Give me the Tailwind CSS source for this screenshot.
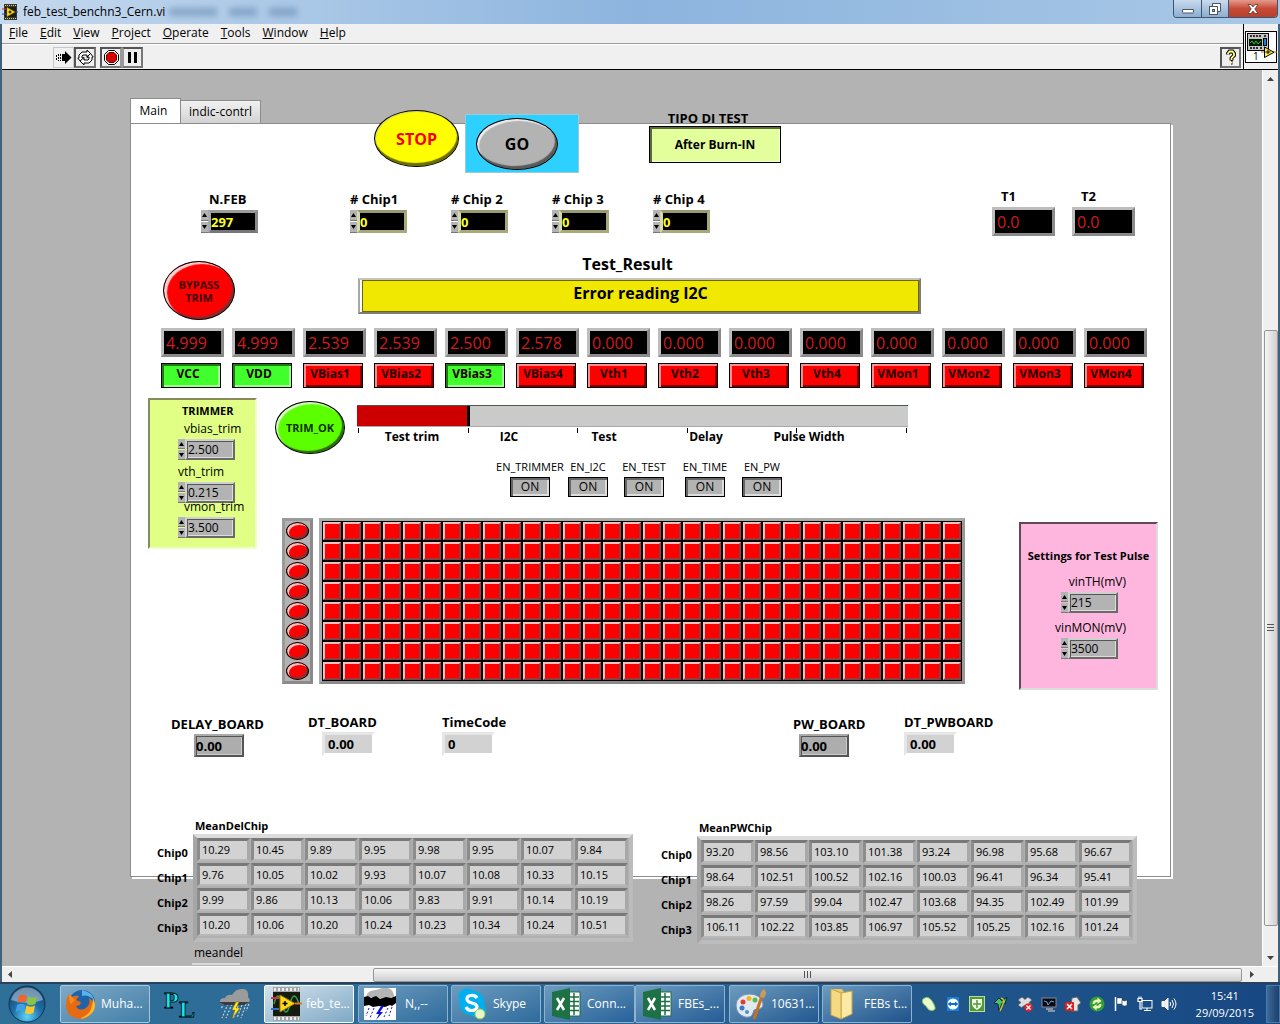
<!DOCTYPE html>
<html lang="en">
<head>
  <meta charset="UTF-8">
  <meta name="viewport" content="width=device-width, initial-scale=1.0">
  <title>feb_test_benchn3_Cern.vi</title>
  <script src="https://cdn.jsdelivr.net/npm/@tailwindcss/browser@4"></script>
</head>
<body class="flex min-h-screen flex-col bg-[#2a668f] font-['Open_Sans','Noto_Sans',sans-serif] text-[12px] leading-4 text-black">

<!-- Title bar -->
<header class="relative flex h-6 items-center overflow-hidden bg-linear-to-r from-[#c5d9ee] via-[#8cb4de] to-[#a9c8e6] pl-[2px]">
  <svg class="h-4 w-4" viewBox="0 0 16 16">
    <rect x="2" y="0" width="13" height="16" fill="#3a3a2c"/>
    <path d="M3 1.500h11M3 14.500h11" stroke="#c8c8b0" stroke-dasharray="1 1"/>
    <rect x="3" y="3" width="11" height="10" fill="#1d1d12"/>
    <path d="M5 3.500v9l8-4.500z" fill="#ffdf1c" stroke="#b98a00" stroke-width=".5"/>
    <path d="M6.500 8h3M8 6.500v3" stroke="#000"/>
    <path d="M0 5h4" stroke="#e02020"/><path d="M0 10h4M13 8h3" stroke="#2040d0"/>
  </svg>
  <h1 class="ml-[5px] text-[12px]">feb_test_benchn3_Cern.vi</h1>
  <div class="ml-1 h-2 w-12 bg-[#3f6a94]/40 blur-[3px]"></div>
  <div class="ml-3 h-2 w-7 bg-[#3f6a94]/40 blur-[3px]"></div>
  <div class="ml-3 h-2 w-7 bg-[#3f6a94]/40 blur-[3px]"></div>
  <div class="mr-[2px] ml-auto flex h-[18px] self-start overflow-hidden rounded-b border border-t-0 border-[#3d5573]">
    <button class="flex w-7 items-center justify-center border-r border-[#3d5573] bg-linear-to-b from-[#c9dbee] to-[#8dadd0]" aria-label="Minimize">
      <svg class="h-3 w-3" viewBox="0 0 12 12"><rect x=".5" y="6.500" width="11" height="3.500" rx=".5" fill="#fff" stroke="#4a5568"/></svg>
    </button>
    <button class="flex w-[27px] items-center justify-center border-r border-[#3d5573] bg-linear-to-b from-[#c9dbee] to-[#8dadd0]" aria-label="Restore">
      <svg class="h-3 w-3" viewBox="0 0 12 12"><path d="M3.500.5h8v8h-3v-5h-5z" fill="#fff" stroke="#4a5568"/><rect x=".5" y="3.500" width="8" height="8" fill="#fff" stroke="#4a5568"/><rect x="3.500" y="6.500" width="2" height="2" fill="#8dadd0" stroke="#4a5568"/></svg>
    </button>
    <button class="flex w-12 items-center justify-center bg-linear-to-b from-[#e49a8c] via-[#c64a37] to-[#b8402c]" aria-label="Close">
      <svg class="h-3 w-3" viewBox="0 0 12 12"><path d="M1 1.500h3L6 4l2-2.500h3L7.800 6l3.200 4.500H8L6 8l-2 2.500H1L4.200 6z" fill="#fff" stroke="#54392f" stroke-width=".8"/></svg>
    </button>
  </div>
</header>

<div class="flex flex-1 flex-col border-x-2 border-[#40617c]">

  <!-- Menu and tool bar -->
  <div class="flex h-[46px] border-b border-black bg-[#f0f0f0]">
    <div class="flex-1">
      <nav class="flex h-5 items-center gap-3 border-b border-[#9a9a9a] pb-[2px] pl-[7px]">
        <a href="#"><u>F</u>ile</a>
        <a href="#"><u>E</u>dit</a>
        <a href="#"><u>V</u>iew</a>
        <a href="#"><u>P</u>roject</a>
        <a href="#"><u>O</u>perate</a>
        <a href="#"><u>T</u>ools</a>
        <a href="#"><u>W</u>indow</a>
        <a href="#"><u>H</u>elp</a>
      </nav>
      <div class="flex h-[25px] items-center border-t border-white pr-[2px] pl-[51px]">
        <button class="flex h-[21px] w-[21px] items-center justify-center border border-[#c8c8c8] bg-[#f0f0f0]" aria-label="Run">
          <svg class="h-[17px] w-[17px]" viewBox="0 0 17 17"><path d="M7 5h3V2l6.500 6.500L10 15v-3H7z"/><path d="M1.500 6v5M3.500 5v7M5.500 5v7" stroke="#000" stroke-dasharray="2 1"/></svg>
        </button>
        <button class="flex h-[21px] w-[22px] items-center justify-center border-2 border-t-[#555] border-r-[#777] border-b-[#777] border-l-[#555] bg-[#eee]" aria-label="Run continuously">
          <svg class="h-[17px] w-[17px] shrink-0" viewBox="0 0 17 17" fill="#fff" stroke="#000"><path d="M2 9V6l3-3h5V1l4 4-4 3.500V6H6L5 7v2h2l-3.500 3.500L.8 9z"/><path d="M15 8v3l-3 3H7v2l-4-4 4-3.500V11h4l1-1V8h-2l3.500-3.500L16.200 8z"/></svg>
        </button>
        <button class="ml-1 flex h-[21px] w-[22px] items-center justify-center border-2 border-t-[#555] border-r-[#999] border-b-[#777] border-l-[#555] bg-[#eee]" aria-label="Abort execution">
          <svg class="h-[17px] w-[17px] shrink-0" viewBox="0 0 17 17"><path d="M5.500 1.500h6l4 4v6l-4 4h-6l-4-4v-6z" fill="#fff" stroke="#000"/><path d="M6 3.500h5l2.500 2.500v5L11 13.500H6L3.500 11V6z" fill="#d80000" stroke="#600"/></svg>
        </button>
        <button class="flex h-[21px] w-[21px] items-center justify-center border-2 border-t-[#555] border-r-[#777] border-b-[#777] border-l-[#999] bg-[#eee]" aria-label="Pause">
          <svg class="h-[11px] w-[11px]" viewBox="0 0 11 11"><path d="M1 0h3v11H1zM7 0h3v11H7z"/></svg>
        </button>
        <button class="ml-auto flex h-[21px] w-[21px] items-center justify-center border-2 border-t-[#555] border-r-[#777] border-b-[#777] border-l-[#555] bg-[#eee]" aria-label="Context help">
          <svg class="h-4 w-3" viewBox="0 0 12 16" fill="none"><path d="M3 5.500V4.500l1.500-2h3l1.500 2v2L6.500 9v2.500M6 13.500h1.500" stroke="#000" stroke-width="3.800"/><path d="M3 5.500V4.500l1.500-2h3l1.500 2v2L6.500 9v2M6 13.500h1.300" stroke="#ffff80" stroke-width="1.800"/></svg>
        </button>
      </div>
    </div>
    <div class="flex w-[35px] items-center border-l border-black pl-px">
      <svg class="h-8 w-8 shrink-0" viewBox="0 0 32 32">
        <rect x=".5" y=".5" width="31" height="31" fill="#fff" stroke="#000"/>
        <rect x="2.500" y="2.500" width="21" height="17" fill="#c4c4c4" stroke="#000"/>
        <path d="M5 5h12M19 5h3M5 17h8M15 17h2" stroke="#000" stroke-width="1.500" stroke-dasharray="2 1"/>
        <rect x="4" y="8" width="13" height="7" fill="#001a00"/><path d="M5 12l2-2 2 3 2-3 2 3 3-3" stroke="#30c030" fill="none"/>
        <rect x="18.500" y="7.500" width="3" height="7" fill="#1a80e0" stroke="#000"/>
        <path d="M16 21h3M28 21h4" stroke="#e05010"/><path d="M19.500 16v10.500L29 21.300z" fill="#ffef30" stroke="#000"/><path d="M20.500 21h5M23 19v4" stroke="#000"/>
        <text x="8" y="29" font-size="10" fill="#000">1</text>
      </svg>
    </div>
  </div>

  <div class="flex flex-1">

    <!-- Front panel -->
    <main class="flex-1 bg-[#b3b3b3] pt-7 pr-[91px] pl-32">
      <div class="flex items-end" role="tablist">
        <button class="h-[25px] w-[51px] border border-b-0 border-[#8c8c8c] bg-white pr-1 text-[12px]" role="tab" aria-selected="true">Main</button>
        <button class="h-[23px] w-20 border border-b-0 border-l-0 border-[#8c8c8c] bg-linear-to-b from-[#f2f2f2] to-[#d2d2d2] text-[12px]" role="tab">indic-contrl</button>
      </div>

      <div class="border border-[#8c8c8c] bg-white pb-[119px] shadow-[2px_2px_0_#fff]">

        <div class="-mt-[14px] flex h-16 items-start pl-[243px]">
          <button class="h-[57px] w-[85px] rounded-[50%] border border-black bg-[#ffff00] text-[16px] font-bold text-[#f00000] shadow-[inset_-1px_-3px_1px_#6b6b00,inset_1px_1px_1px_#d8d860]">STOP</button>
          <div class="mt-1 ml-[6px] flex h-[59px] w-[114px] border border-[#9fc8d8] bg-[#2ed0ff] pt-[3px] pl-[10px]">
            <button class="h-[52px] w-[82px] rounded-[50%] border border-black bg-[#b3b3b3] text-[16px] font-bold shadow-[inset_-2px_-3px_1px_#5a5a5a,inset_2px_2px_1px_#ececec]">GO</button>
          </div>
          <div class="ml-[70px] flex w-[132px] flex-col text-center font-bold">
            <label for="testType" class="pr-[14px] text-[13px] leading-4">TIPO DI TEST</label>
            <input id="testType" value="After Burn-IN" class="h-[37px] w-full border border-black bg-[#e2ff9b] text-center text-[12px] shadow-[inset_2px_2px_0_#5d6b3a,inset_-1px_-1px_0_#f4ffd8]">
          </div>
        </div>

        <div id="headerRow" class="flex h-[72px] items-start pt-[17px] pr-[35px] pl-[70px] text-[13px] leading-4 font-bold"></div>

        <div class="flex h-[82px] items-start pt-[10px] pl-8">
          <button class="mt-[5px] h-[59px] w-[72px] rounded-[50%] border border-black bg-[#ff0000] text-[11px] leading-[13px] font-bold text-[#400000] shadow-[inset_-2px_-2px_1px_#7a3030,inset_3px_2px_1px_#ffd0d0]">BYPASS<br>TRIM</button>
          <div class="ml-[123px] w-[563px]">
            <label for="testResult" class="block h-[22px] pr-6 text-center text-[16px] leading-4 font-bold">Test_Result</label>
            <div class="border-2 border-t-[#c4c4c4] border-r-[#7c7c7c] border-b-[#7c7c7c] border-l-[#a8a8a8] pl-[2px]">
              <input id="testResult" value="Error reading I2C" class="h-8 w-full border border-[#6b6600] bg-[#f0e800] pb-[6px] text-center text-[16px] font-bold">
            </div>
          </div>
        </div>

        <div id="channels" class="grid grid-cols-[repeat(14,minmax(0,1fr))] pr-[15px] pl-[30px]"></div>

        <div class="mt-[10px] flex items-start pl-[17px]">
          <fieldset class="h-[151px] w-[109px] border-2 border-t-[#868a5c] border-r-[#eeffc8] border-b-[#eeffc8] border-l-[#868a5c] bg-[#e0ff84] pt-[3px] pl-7">
            <h2 class="pl-1 text-[11px] leading-[15px] font-bold">TRIMMER</h2>
            <div id="trimmer" class="flex flex-col gap-1 pt-[3px]"></div>
          </fieldset>

          <div class="ml-[18px] w-[690px]">
            <div class="flex h-[61px] items-start pt-[3px]">
              <button class="h-[53px] w-[70px] shrink-0 rounded-[50%] border border-black bg-[#5cff00] text-[11px] font-bold text-[#103000] shadow-[inset_-2px_-2px_1px_#2d6a10,inset_2px_2px_1px_#e0f0d8]">TRIM_OK</button>
              <div class="ml-3 w-[551px] pt-1">
                <div class="h-[22px] border-t border-b border-t-[#4a5a4a] border-b-[#aaa] bg-[#cacaca]" role="progressbar" aria-label="Test progress" aria-valuenow="1" aria-valuemax="5">
                  <div class="h-[20px] border-r-3 border-black bg-[#cc0000]" style="width: 20.500%"></div>
                </div>
                <div class="flex justify-between pt-[1px] pr-px pl-px">
                  <i class="h-[5px] w-px bg-black"></i><i class="h-[5px] w-px bg-black"></i><i class="h-[5px] w-px bg-black"></i><i class="h-[5px] w-px bg-black"></i><i class="h-[5px] w-px bg-black"></i><i class="h-[5px] w-px bg-black"></i>
                </div>
                <div class="-mt-1 ml-[7px] grid grid-cols-[96px_98px_92px_112px_94px] text-center font-bold">
                  <span>Test trim</span><span>I2C</span><span>Test</span><span>Delay</span><span>Pulse Width</span>
                </div>
              </div>
            </div>

            <div id="enables" class="grid h-[59px] grid-cols-[72px_44px_68px_54px_60px] pl-[219px] text-[11px] leading-4"></div>

            <div class="flex gap-[6px] pl-[7px]">
              <div id="leds" class="flex w-8 flex-col border-3 border-t-[#9a9a9a] border-r-[#8a8a8a] border-b-[#8a8a8a] border-l-[#9a9a9a] bg-[#b3b3b3]"></div>
              <div id="matrix" class="grid grid-cols-[repeat(32,20px)] border-3 border-t-[#aaa] border-r-[#999] border-b-[#8a8a8a] border-l-[#aaa] bg-black"></div>
            </div>
          </div>

          <fieldset class="mt-[124px] ml-[54px] h-[168px] w-[139px] border-2 border-t-[#5e4a55] border-r-[#dcdcdc] border-b-[#dcdcdc] border-l-[#5e4a55] bg-[#ffb6de]">
            <h2 class="pt-6 text-center text-[11px] leading-4 font-bold">Settings for Test Pulse</h2>
            <div id="pulse" class="flex flex-col gap-[7px] pt-[10px] pl-[34px]"></div>
          </fieldset>
        </div>

        <div id="boards" class="grid grid-cols-[137px_134px_351px_111px_auto] items-start pt-6 pl-10 text-[13px] leading-4 font-bold"></div>
      </div>

      <!-- The mean tables hang over the lower edge of the panel -->
      <div class="-mt-[58px] flex gap-7 pl-[27px]">
        <table id="meanDel" class="w-[476px] table-fixed border-separate border-spacing-0 self-start"></table>
        <table id="meanPw" class="mt-[2px] w-[476px] table-fixed border-separate border-spacing-0 self-start"></table>
      </div>
      <div class="pt-px pl-16">meandel</div>
      <div class="mt-[2px] ml-[62px] h-[2px] w-12 bg-[#d8d8d8]"></div>
    </main>

    <!-- Vertical scroll bar -->
    <div class="flex w-4 flex-col items-center border-l border-white bg-[#efefef]" aria-hidden="true">
      <svg class="mt-[5px] h-2 w-[7px]" viewBox="0 0 7 8"><path d="M0 6l3.500-4L7 6z" fill="#444"/></svg>
      <div class="mt-[247px] flex w-[14px] flex-1 items-center justify-center rounded-xs border border-[#979797] bg-linear-to-r from-[#f6f6f6] to-[#cfcfd3]">
        <svg class="h-2 w-[7px]" viewBox="0 0 7 8"><path d="M0 .5h7M0 3.500h7M0 6.500h7" stroke="#555"/></svg>
      </div>
      <svg class="mt-7 mb-1 h-2 w-[7px]" viewBox="0 0 7 8"><path d="M0 2l3.500 4L7 2z" fill="#444"/></svg>
    </div>
  </div>

  <!-- Horizontal scroll bar -->
  <div class="flex h-4 items-center border-t border-white bg-[#efefef] pr-[22px] pl-1" aria-hidden="true">
    <svg class="h-[7px] w-2" viewBox="0 0 8 7"><path d="M6 0L2 3.500 6 7z" fill="#444"/></svg>
    <div class="ml-[359px] flex h-[14px] flex-1 items-center justify-center rounded-xs border border-[#979797] bg-linear-to-b from-[#f6f6f6] to-[#cfcfd3]">
      <svg class="h-[7px] w-2" viewBox="0 0 8 7"><path d="M.5 0v7M3.500 0v7M6.500 0v7" stroke="#555"/></svg>
    </div>
    <svg class="ml-[6px] h-[7px] w-2" viewBox="0 0 8 7"><path d="M2 0l4 3.500L2 7z" fill="#444"/></svg>
  </div>
</div>

<!-- Task bar -->
<footer class="relative flex h-[42px] items-center border-t-2 border-[#29425a] bg-linear-to-r from-[#2f7099] via-[#2b6594] to-[#174782] text-white">
  <button class="ml-2 h-[38px] w-[38px]" aria-label="Start">
    <svg class="h-full w-full" viewBox="0 0 38 38">
      <defs><radialGradient id="orb" cx=".5" cy=".85" r=".8"><stop offset="0" stop-color="#5fd6f8"/><stop offset=".5" stop-color="#1f6fa8"/><stop offset="1" stop-color="#16456f"/></radialGradient></defs>
      <circle cx="19" cy="19" r="18" fill="url(#orb)" stroke="#123450"/>
      <path d="M3 15a16.500 16.500 0 0 1 32 0q-16 6-32 0z" fill="#fff" opacity=".4"/>
      <path d="M11 11q4-3 8 0l-1.500 7q-4-2.500-8 0z" fill="#f1642a"/><path d="M20.500 11.500q4 2.500 8.500 0l-1.500 7.500q-4.500 2-8.500 0z" fill="#8cc63e"/>
      <path d="M9 20q4-2.500 8 0l-1.500 7q-4-2.500-8 0z" fill="#3fa0e6"/><path d="M18.500 20.500q4 2.500 8.500 0L25.500 28q-4.500 2-8.500 0z" fill="#fdc72e"/>
    </svg>
  </button>
  <button class="ml-[14px] flex h-[38px] w-[90px] items-center gap-1 rounded-xs border border-[#a9c6da] bg-linear-to-br from-[#7ea9c6] to-[#417fa8] pl-1">
    <svg class="h-8 w-8 shrink-0" viewBox="0 0 32 32"><circle cx="17" cy="15" r="13" fill="#1f63ad"/><path d="M17 2q10 2 12 10-6-6-12-4z" fill="#59b4e8"/><path d="M4 6l3 3q3-2 7-1l-3 4 5 2-1 3-4 1q2 5 8 3 7-3 5-11 7 5 4 13-4 8-13 8Q2 30 1 18 1 11 4 6z" fill="#e66a12"/><path d="M28 10q5 9-2 16-5 5-12 5 10-4 12-10 2-5 2-11z" fill="#fbb92a"/><path d="M4 6l3 3 3 3-4 4q-3-5-2-10z" fill="#f58a1f"/></svg>
    <span>Muha...</span>
  </button>
  <button class="ml-3 h-9 w-9" aria-label="PL">
    <svg class="h-full w-full overflow-visible" viewBox="0 0 36 36"><g font-family="Liberation Serif" font-weight="bold" font-size="24" fill="#16e6ee" stroke="#000" stroke-width=".8"><text x="2" y="22">P</text><text x="17" y="31">L</text></g></svg>
  </button>
  <button class="ml-[18px] h-9 w-9" aria-label="Thunderstorm">
    <svg class="h-full w-full" viewBox="0 0 36 36"><path d="M8 17l-3 6M12 18l-6 14M16 18l-6 14M22 20l-5 13M26 19l-5 13M30 18l-5 14M33 18l-3 7" stroke="#c8d0d6" stroke-dasharray="2 1.500" stroke-width="1.200"/><path d="M4 17q-1-5 5-5 2-4 7-3Q20 2 27 3q6 0 5 8 4 4-1 7H7z" fill="#9b9b9b"/><path d="M3 16h31l-6 3-20 0z" fill="#3b3b3b"/><path d="M20 16l-4 8h3l-3 9 8-11h-4l3-6z" fill="#ffe92b" stroke="#8a6a00" stroke-width=".5"/></svg>
  </button>
  <button class="ml-3 flex h-[38px] w-[90px] items-center gap-1 rounded-xs border border-white bg-linear-to-br from-[#d4e2ec] to-[#7fa9c5] pl-[6px]">
    <svg class="h-9 w-[31px] shrink-0" viewBox="0 0 31 36"><rect x="2" y="1" width="27" height="34" fill="#a5a5a5"/><path d="M3 3.500h25M3 32.500h25" stroke="#eee" stroke-width="3" stroke-dasharray="2 2"/><rect x="2" y="6" width="27" height="24" fill="#161b10"/><path d="M3 18q4-16 8 0t8 0 9 0" fill="none" stroke="#2aa35f" stroke-width="1.500"/><path d="M9 9v17l15-8.500z" fill="#ffd91a" stroke="#a67a00"/><path d="M11.500 17.500h5M14 15v5" stroke="#000" stroke-width="1.500"/><path d="M0 12h8" stroke="#e03030" stroke-width="2"/><path d="M0 23h8" stroke="#3070c0" stroke-width="2"/><path d="M24 17.500h7" stroke="#e07030" stroke-width="2"/></svg>
    <span>feb_te...</span>
  </button>
  <button class="ml-1 flex h-[38px] w-[90px] items-center gap-[9px] rounded-xs border border-[#8fb3cf] bg-linear-to-br from-[#6d9cbe] to-[#2d6b9c] pl-[5px]">
    <svg class="h-8 w-8 shrink-0" viewBox="0 0 32 32"><rect width="32" height="32" fill="#fff"/><path d="M2 8q2-6 10-6l6-2h6q6 2 6 9-14 4-28-1z" fill="#b5b5b5"/><path d="M0 9l4-1 3 2 5-2 4 3 6-2 5 1 5-2v7l-4 3-2-1-5 2-6-1-6 1-4-2-5 1z" fill="#000"/><path d="M5 20l-3 8M10 20l-4 10M24 20l-4 9M28 19l-3 9" stroke="#1010e0" stroke-dasharray="2 2"/><path d="M17 18l-5 8h3l-3 6 7-8h-3l4-6z" fill="#1010e8"/></svg>
    <span>N,,--</span>
  </button>
  <button class="ml-[3px] flex h-[38px] w-[90px] items-center gap-[7px] rounded-xs border border-[#8fb3cf] bg-linear-to-br from-[#6d9cbe] to-[#2d6b9c] pl-[6px]">
    <svg class="h-8 w-7 shrink-0" viewBox="0 0 28 32"><circle cx="9" cy="9" r="8.500" fill="#00aff0"/><circle cx="14" cy="15" r="12.500" fill="#00aff0"/><circle cx="20" cy="22" r="8" fill="#00aff0"/><path d="M19 10q-2-3-6-2.500-4.500.5-4 4 .5 2.500 5 3.500t5 3.500q0 4-5.500 4-4 0-5.500-3.500" fill="none" stroke="#fff" stroke-width="3.200"/><circle cx="22" cy="26" r="5" fill="#e9f7c8" stroke="#9cc850"/></svg>
    <span>Skype</span>
  </button>
  <button class="ml-[3px] flex h-[38px] w-[91px] items-center gap-[5px] rounded-xs border border-[#8fb3cf] bg-linear-to-br from-[#6d9cbe] to-[#26629a] pl-[6px]">
    <svg class="h-8 w-[31px] shrink-0" viewBox="0 0 31 32"><rect x="16" y="4" width="13" height="24" fill="#fff" stroke="#1e6e42"/><path d="M17 9h11M17 13.500h11M17 18h11M17 22.500h11M23 5v22" stroke="#1e6e42" stroke-width="1.500"/><path d="M1 4L19 0v32L1 28z" fill="#1e7145"/><path d="M6 10l7 12M13 10L6 22" stroke="#fff" stroke-width="2.500"/></svg>
    <span>Conn...</span>
  </button>
  <button class="flex h-[38px] w-[90px] items-center gap-[5px] rounded-xs border border-[#8fb3cf] bg-linear-to-br from-[#6d9cbe] to-[#245c96] pl-[6px]">
    <svg class="h-8 w-[31px] shrink-0" viewBox="0 0 31 32"><rect x="16" y="4" width="13" height="24" fill="#fff" stroke="#1e6e42"/><path d="M17 9h11M17 13.500h11M17 18h11M17 22.500h11M23 5v22" stroke="#1e6e42" stroke-width="1.500"/><path d="M1 4L19 0v32L1 28z" fill="#1e7145"/><path d="M6 10l7 12M13 10L6 22" stroke="#fff" stroke-width="2.500"/></svg>
    <span>FBEs_...</span>
  </button>
  <button class="ml-1 flex h-[38px] w-[90px] items-center gap-1 rounded-xs border border-[#8fb3cf] bg-linear-to-br from-[#6d9cbe] to-[#22588f] pl-[5px]">
    <svg class="h-8 w-8 shrink-0" viewBox="0 0 32 32"><path d="M14 6q12 0 14 10 0 5-6 5-4 0-4 4-1 5-8 4Q1 26 1 17 2 7 14 6z" fill="#dfe9f2" stroke="#7795ad"/><circle cx="8" cy="14" r="2.500" fill="#e23c2c"/><circle cx="14" cy="10.500" r="2.500" fill="#f2b321"/><circle cx="20" cy="12" r="2.500" fill="#58b947"/><circle cx="7" cy="20" r="2.500" fill="#3d79cf"/><circle cx="12" cy="24" r="2" fill="#4a90d0"/><path d="M27 8L19 31" stroke="#c96f22" stroke-width="3"/><path d="M25 9q0-6 4-8 4 3 0 9z" fill="#c79a62"/></svg>
    <span>10631...</span>
  </button>
  <button class="ml-[3px] flex h-[38px] w-[90px] items-center gap-[8px] rounded-xs border border-[#8fb3cf] bg-linear-to-br from-[#6d9cbe] to-[#1e528b] pl-[5px]">
    <svg class="h-8 w-7 shrink-0" viewBox="0 0 28 32"><path d="M3 1h11l2 3v25l-13-2z" fill="#e8c964"/><path d="M13 5l11-2v23l-11 5z" fill="#fbeaa6" stroke="#c9a545"/><path d="M3 1l10 4v26L3 27z" fill="#f5da83" stroke="#c9a545"/></svg>
    <span>FEBs t...</span>
  </button>

  <div class="ml-[9px] flex items-center gap-2">
    <svg class="h-4 w-4" viewBox="0 0 16 16"><path d="M2 3q5-4 9 2 5 8 2 9-5 2-8-4-5-3-3-7z" fill="#e8fbd0" stroke="#8ac858"/></svg>
    <svg class="h-4 w-4" viewBox="0 0 16 16"><path d="M2 1h12v14H2z" fill="#1680e0"/><circle cx="8" cy="8" r="5.500" fill="#fff"/><path d="M2.500 8L6 5.500V7h4V5.500L13.500 8 10 10.500V9H6v1.500z" fill="#0f6fd0"/></svg>
    <svg class="h-4 w-4" viewBox="0 0 16 16"><rect x=".5" y=".5" width="15" height="15" fill="#4f9c37" stroke="#b7dba3"/><path d="M3 3h10v6q-2 4-5 5-3-1-5-5z" fill="#f2f7e6"/><path d="M8 4v8M4 8h8" stroke="#4f9c37" stroke-width="1.500"/></svg>
    <svg class="h-4 w-4" viewBox="0 0 16 16"><path d="M1 7l5-5 3 3 5-4-2 7-3-1-3 8-1-7z" fill="#48c26a" stroke="#033"/><path d="M8 2q4 1 2 6l-3 7" fill="none" stroke="#e8b81a" stroke-width="1.500"/></svg>
    <svg class="h-4 w-4" viewBox="0 0 16 16"><path d="M1 4l4-3 3 2.500L11 1l4 3-3 2.500L15 9l-3.500 2.500L8 9l-3.500 2.500L1 9l3-2.500z" fill="#ddd" stroke="#555" stroke-width=".6"/><circle cx="11.500" cy="11.500" r="4.200" fill="#d8232a"/><path d="M9.500 9.500l4 4M13.500 9.500l-4 4" stroke="#fff" stroke-width="1.300"/></svg>
    <svg class="h-4 w-4" viewBox="0 0 16 16"><rect x="1" y="2" width="14" height="9" fill="#0a0a14" stroke="#889"/><path d="M3 5l3 1 1 3 3-4 3 1" fill="none" stroke="#6ac"/><path d="M5 13h7M7 15h7" stroke="#aaa" stroke-width="1.500"/></svg>
    <svg class="h-4 w-4" viewBox="0 0 16 16"><path d="M7 2l5-1 4 6-3 2v6H5z" fill="#e6e6e6" stroke="#666"/><rect x="0" y="6" width="9" height="9" rx="1" fill="#d81e1e"/><path d="M2 8l5 5M7 8l-5 5" stroke="#fff" stroke-width="1.500"/></svg>
    <svg class="h-4 w-4" viewBox="0 0 16 16"><circle cx="8" cy="8" r="7.500" fill="#2f9e38"/><path d="M3.500 8q0-4.500 5-4.500V1.500l4 3.500-4 3V6Q6 6 5.500 8zM12.500 8q0 4.500-5 4.500v2l-4-3.500 4-3v2q2.500 0 3-2z" fill="#f2f5b8"/></svg>
    <svg class="h-4 w-4" viewBox="0 0 16 16"><path d="M2.500 1v14" stroke="#fff" stroke-width="1.500"/><path d="M4 2h5v6H4zM9 4q3 2 5 0v5q-2 2-5 0z" fill="#fff" stroke="#233" stroke-width=".4"/></svg>
    <svg class="h-4 w-4" viewBox="0 0 16 16" fill="none" stroke="#fff"><rect x="5" y="4.500" width="10" height="7.500"/><path d="M7 14.500h7M10 12v2M1 2.500h4v3H1zM2 .5v2M4 .5v2M3 6v7h2" stroke-width="1.200"/></svg>
    <svg class="h-4 w-4" viewBox="0 0 16 16" fill="none" stroke="#fff"><path d="M1 5.500h2.500L7 2v12L3.500 10.500H1z" fill="#eee"/><path d="M9 6q1.500 2 0 4M11 4q3 4 0 8M13 2.500q4 5.500 0 11"/></svg>
  </div>
  <time class="ml-auto pr-3 text-center text-[11px] leading-[17px]">15:41<br>29/09/2015</time>
  <button class="h-[38px] w-[14px] border border-[#4c7aa6] bg-linear-to-r from-[#3c6a9c] to-[#1b3f6b]" aria-label="Show desktop"></button>
</footer>

<script>
const byId = (id) => document.getElementById(id);

// Numeric control: up/down buttons next to a text box
const arrows = `
  <span class="flex w-[7px] flex-col gap-px">
    <button class="flex-1 bg-[#b3b3b3] border-b border-[#777]" aria-label="Increment"><svg class="mx-auto h-1 w-[5px]" viewBox="0 0 5 4"><path d="M0 4l2.500-4L5 4z"/></svg></button>
    <button class="flex-1 bg-[#b3b3b3] border-b border-[#777]" aria-label="Decrement"><svg class="mx-auto h-1 w-[5px]" viewBox="0 0 5 4"><path d="M0 0l2.500 4L5 0z"/></svg></button>
  </span>`;

const darkSpin = (id, label, value, rim) => `
  <div class="w-[57px]">
    <label for="${id}" class="block whitespace-nowrap ${id === 'feb' ? 'pl-2' : ''}">${label}</label>
    <div class="mt-[3px] flex h-[23px]">${arrows}
      <input id="${id}" value="${value}" class="w-[50px] border-3 bg-black text-[13px] font-bold text-[#ffff20] ${rim}">
    </div>
  </div>`;

const graySpin = (id, label, value, box, labelPad, spinPad) => `
  <div class="${box}">
    <label for="${id}" class="block ${labelPad}">${label}</label>
    <div class="mt-[2px] flex h-[21px] ${spinPad}">${arrows}
      <input id="${id}" value="${value}" class="w-[50px] border-2 border-t-[#d0d0d0] border-r-[#6a6a6a] border-b-[#6a6a6a] border-l-[#d0d0d0] bg-[#b3b3b3] pl-px text-[12px] shadow-[inset_1px_1px_0_#555,inset_-1px_-1px_0_#ddd]">
    </div>
  </div>`;

const display = (id, value) => `<input id="${id}" value="${value}" readonly class="block h-[29px] w-[63px] border-3 border-t-[#bdbdbd] border-r-[#8a8a8a] border-b-[#8a8a8a] border-l-[#bdbdbd] bg-black pl-[2px] text-[16px] text-[#d01c1c]">`;

const grayRim = 'border-t-[#9a9a9a] border-r-[#8a8a8a] border-b-[#777] border-l-[#aaa]';
const yellowRim = 'border-t-[#9a9a72] border-r-[#a8a878] border-b-[#a8a878] border-l-[#d8d8a8]';
byId('headerRow').innerHTML =
  darkSpin('feb', 'N.FEB', 297, grayRim) +
  '<div class="ml-[92px] flex gap-11">' +
  ['# Chip1', '# Chip 2', '# Chip 3', '# Chip 4'].map((l, i) => darkSpin('chip' + i, l, 0, yellowRim)).join('') +
  '</div><div class="ml-auto -mt-[3px] flex gap-[17px]">' +
  ['T1', 'T2'].map((l) => `<div class="font-normal"><label for="${l}" class="block pb-[3px] pl-[9px] font-bold">${l}</label>${display(l, '0.0')}</div>`).join('') +
  '</div>';

const channels = [
  ['VCC', '4.999', 1], ['VDD', '4.999', 1], ['VBias1', '2.539', 0], ['VBias2', '2.539', 0], ['VBias3', '2.500', 1],
  ['VBias4', '2.578', 0], ['Vth1', '0.000', 0], ['Vth2', '0.000', 0], ['Vth3', '0.000', 0], ['Vth4', '0.000', 0],
  ['VMon1', '0.000', 0], ['VMon2', '0.000', 0], ['VMon3', '0.000', 0], ['VMon4', '0.000', 0],
];
byId('channels').innerHTML = channels.map(([name, value, ok]) => {
  const tone = ok
    ? 'bg-[#40ff2c] shadow-[inset_2px_2px_0_#1f7a14,inset_-2px_-2px_0_#a0ff90]'
    : 'bg-[#ff0000] shadow-[inset_2px_2px_0_#ff9090,inset_-2px_-2px_0_#800000]';
  return `<div>${display(name, value)}
    <label for="${name}" class="mt-[6px] block h-[25px] w-[60px] border border-black pr-[6px] text-center leading-[19px] font-bold text-[#200000] ${tone}">${name}</label></div>`;
}).join('');

byId('trimmer').innerHTML =
  graySpin('vbias', 'vbias_trim', '2.500', '', 'pl-[6px]', '') +
  graySpin('vth', 'vth_trim', '0.215', '', '', '') +
  graySpin('vmon', 'vmon_trim', '3.500', '-mt-2', 'pl-[6px]', '');
byId('pulse').innerHTML =
  graySpin('vinth', 'vinTH(mV)', '215', 'w-[71px]', 'text-right', 'pl-[6px]') +
  graySpin('vinmon', 'vinMON(mV)', '3500', 'w-[71px]', 'text-right', 'pl-[6px]');

byId('enables').innerHTML = ['EN_TRIMMER', 'EN_I2C', 'EN_TEST', 'EN_TIME', 'EN_PW'].map((l) => `
  <div class="flex flex-col items-center">
    <span id="${l}" class="whitespace-nowrap">${l}</span>
    <button aria-labelledby="${l}" class="mt-[2px] h-5 w-10 border border-black bg-[#b3b3b3] text-[12px] leading-4 shadow-[inset_2px_2px_0_#666,inset_-2px_-2px_0_#ddd]">ON</button>
  </div>`).join('');

byId('leds').innerHTML = '<i class="m-px h-[18px] rounded-[50%] border border-black bg-[#ff0000] shadow-[inset_2px_2px_0_#ffc0c0,inset_-2px_-2px_0_#8a3030]"></i>'.repeat(8);
byId('matrix').innerHTML = '<i class="m-px h-[18px] border-2 border-t-[#ffc0c0] border-r-[#8a4040] border-b-[#8a4040] border-l-[#ffc0c0] bg-[#ff0000]"></i>'.repeat(256);

const sunken = 'h-[23px] w-[50px] border-2 border-t-[#aaa] border-r-[#555] border-b-[#555] border-l-[#999] bg-[#adadad] shadow-[inset_1px_1px_0_#555,inset_-1px_-1px_0_#ccc]';
const flat = 'h-6 w-[53px] border-3 border-t-[#e6e6e6] border-r-[#fff] border-b-[#fff] border-l-[#e6e6e6] bg-[#d2d2d2] pl-[3px]';
byId('boards').innerHTML = [
  ['DELAY_BOARD', '0.00', 'pt-[2px]', sunken + ' ml-[23px]'],
  ['DT_BOARD', '0.00', '', flat + ' ml-[14px]'],
  ['TimeCode', '0', '', flat],
  ['PW_BOARD', '0.00', 'pt-[2px]', sunken + ' ml-[6px]'],
  ['DT_PWBOARD', '0.00', '', flat],
].map(([l, v, box, field]) => `<div class="flex flex-col items-start gap-[2px] ${box}"><label for="${l}">${l}</label><input id="${l}" value="${v}" readonly class="${field}"></div>`).join('');

function fillTable(id, caption, rows) {
  byId(id).innerHTML = `<caption class="h-[15px] pl-[38px] text-left text-[11px] leading-[14px] font-bold">${caption}</caption>` +
    '<colgroup><col class="w-9"><col class="w-[58px]"><col span="6" class="w-[54px]"><col class="w-[58px]"></colgroup>' +
    rows.map((row, r) => {
      const top = r === 0 ? 'border-t-4 ' : '';
      const bottom = r === 3 ? 'border-b-4 ' : '';
      return `<tr><th scope="row" class="border-transparent p-0 pt-1 text-left text-[11px] leading-4 font-bold ${top}${bottom}">Chip${r}</th>` +
        row.split(' ').map((v, c) => `<td class="border-t-[#dcdcdc] border-r-[#bcbcbc] border-b-[#bcbcbc] border-l-[#a6a6a6] bg-[#b0b0b0] p-0 ${top}${bottom}${c === 0 ? 'border-l-4' : ''} ${c === 7 ? 'border-r-4' : ''}"><div class="mr-px mb-[2px] h-[23px] border-t-3 border-r-3 border-b-2 border-l-3 border-t-[#787878] border-r-[#a8a8a8] border-b-[#b8b8b8] border-l-[#8c8c8c] bg-[#d2d2d2] pl-[2px] text-[11px] leading-[18px]">${v}</div></td>`).join('') +
        '</tr>';
    }).join('');
}
fillTable('meanDel', 'MeanDelChip', [
  '10.29 10.45 9.89 9.95 9.98 9.95 10.07 9.84',
  '9.76 10.05 10.02 9.93 10.07 10.08 10.33 10.15',
  '9.99 9.86 10.13 10.06 9.83 9.91 10.14 10.19',
  '10.20 10.06 10.20 10.24 10.23 10.34 10.24 10.51',
]);
fillTable('meanPw', 'MeanPWChip', [
  '93.20 98.56 103.10 101.38 93.24 96.98 95.68 96.67',
  '98.64 102.51 100.52 102.16 100.03 96.41 96.34 95.41',
  '98.26 97.59 99.04 102.47 103.68 94.35 102.49 101.99',
  '106.11 102.22 103.85 106.97 105.52 105.25 102.16 101.24',
]);
</script>
</body>
</html>
